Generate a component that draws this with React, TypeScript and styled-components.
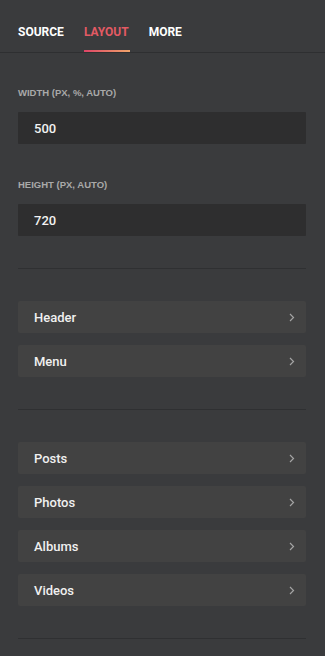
import styled, { createGlobalStyle } from "styled-components";

const GlobalStyle = createGlobalStyle`
  html, body {
    margin: 0;
    padding: 0;
    background: #3a3b3d;
  }
  body {
    font-family: Roboto, "Liberation Sans", sans-serif;
  }
`;

type RowProps = { label: string };

function NavRow({ label }: RowProps) {
  return (
    <Row>
      <span>{label}</span>
      <svg width="6" height="9" viewBox="0 0 6 9">
        <path d="M1 1l3.5 3.5L1 8" fill="none" stroke="#a4a4a4" strokeWidth="1.2" />
      </svg>
    </Row>
  );
}

export default function App() {
  return (
    <Panel>
      <GlobalStyle />
      <Tabs>
        <Tab>Source</Tab>
        <Tab $active>Layout</Tab>
        <Tab>More</Tab>
      </Tabs>
      <Body>
        <Field>
          <Label>Width (px, %, auto)</Label>
          <Input>500</Input>
        </Field>
        <Field>
          <Label>Height (px, auto)</Label>
          <Input>720</Input>
        </Field>
        <Divider />
        <Group>
          <NavRow label="Header" />
          <NavRow label="Menu" />
        </Group>
        <Divider />
        <Group>
          <NavRow label="Posts" />
          <NavRow label="Photos" />
          <NavRow label="Albums" />
          <NavRow label="Videos" />
        </Group>
        <Divider />
      </Body>
    </Panel>
  );
}

const Panel = styled.div`
  width: 325px;
  min-height: 656px;
  background: #3a3b3d;
  color: #fff;
`;

const Tabs = styled.div`
  display: flex;
  gap: 20px;
  padding: 0 18px;
  height: 52px;
  border-bottom: 1px solid #2e2f31;
`;

const Tab = styled.div<{ $active?: boolean }>`
  position: relative;
  display: flex;
  align-items: center;
  padding-top: 12px;
  font-size: 12px;
  font-weight: 700;
  text-transform: uppercase;
  color: ${(p) => (p.$active ? "#e25a64" : "#fff")};

  &::after {
    content: "";
    display: ${(p) => (p.$active ? "block" : "none")};
    position: absolute;
    left: 0;
    right: -1px;
    bottom: 0;
    height: 2px;
    background: linear-gradient(90deg, #dc4466 0%, #f0a46a 100%);
  }
`;

const Body = styled.div`
  padding: 34px 19px 0 18px;
`;

const Field = styled.div`
  margin-bottom: 32px;

  &:first-child {
    margin-bottom: 35px;
  }
`;

const Label = styled.div`
  font-family: "Liberation Sans", Arial, sans-serif;
  font-size: 9.5px;
  font-weight: 700;
  text-transform: uppercase;
  color: #a9a9a9;
  line-height: 12px;
  margin-bottom: 13px;
`;

const Input = styled.div`
  height: 32px;
  display: flex;
  align-items: center;
  padding: 0 16px;
  background: #2e2e2f;
  border-radius: 1px;
  font-size: 13px;
  font-weight: 500;
  color: #f2f2f2;
`;

const Divider = styled.div`
  height: 1px;
  background: #2f3032;
`;

const Group = styled.div`
  display: flex;
  flex-direction: column;
  gap: 12px;
  padding: 32px 0;
`;

const Row = styled.div`
  height: 32px;
  display: flex;
  align-items: center;
  justify-content: space-between;
  padding: 0 11px 0 16px;
  background: #424242;
  border-radius: 2px;
  font-size: 13px;
  font-weight: 500;
  color: #f0f0f0;
`;
